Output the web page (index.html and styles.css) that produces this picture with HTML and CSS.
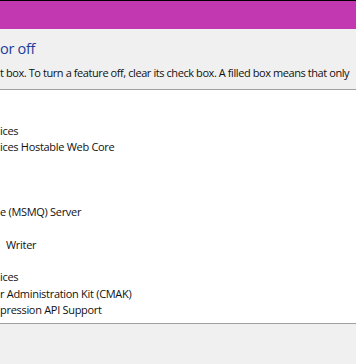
FILE: index.html
```html
<!DOCTYPE html>
<html>
<head>
<meta charset="utf-8">
<link rel="stylesheet" href="styles.css">
</head>
<body>
<div class="window">
  <div class="titlebar"></div>
  <div class="header">
    <div class="title">or off</div>
    <div class="desc">t box. To turn a feature off, clear its check box. A filled box means that only</div>
  </div>
  <div class="list">
    <div class="row"></div>
    <div class="row"></div>
    <div class="row">ices</div>
    <div class="row">ices Hostable Web Core</div>
    <div class="row"></div>
    <div class="row"></div>
    <div class="row"></div>
    <div class="row">e (MSMQ) Server</div>
    <div class="row"></div>
    <div class="row indent">Writer</div>
    <div class="row"></div>
    <div class="row">ices</div>
    <div class="row">r Administration Kit (CMAK)</div>
    <div class="row">pression API Support</div>
  </div>
  <div class="footer"></div>
</div>
</body>
</html>
```
FILE: styles.css
```css
html, body {
  margin: 0;
  padding: 0;
}
body {
  width: 356px;
  height: 364px;
  overflow: hidden;
  background: #f0f0f0;
  font-family: "Open Sans", "Noto Sans", sans-serif;
}
.window {
  display: flex;
  flex-direction: column;
  height: 364px;
}
.titlebar {
  height: 28px;
  border-top: 1px solid #000;
  background: #c138b0;
  flex: none;
}
.header {
  flex: none;
  height: 60px;
  padding-top: 10px;
  box-sizing: border-box;
}
.title {
  font-size: 14.5px;
  line-height: 20px;
  color: #1e3c9a;
  letter-spacing: -0.3px;
}
.desc {
  margin-top: 6px;
  font-size: 11px;
  line-height: 16px;
  color: #111;
  white-space: nowrap;
  letter-spacing: -0.42px;
}
.list {
  flex: none;
  height: 235px;
  box-sizing: border-box;
  background: #fff;
  border-top: 1px solid #a0a0a0;
  border-bottom: 1px solid #a0a0a0;
}
.row {
  height: 16.3px;
  line-height: 16.3px;
  font-size: 11px;
  color: #111;
  white-space: nowrap;
  letter-spacing: -0.3px;
}
.indent {
  padding-left: 6px;
}
.footer {
  flex: 1;
}
```
